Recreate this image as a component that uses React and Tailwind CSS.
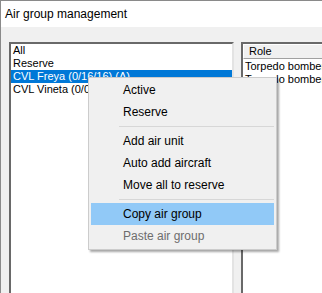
const items = ["All", "Reserve", "CVL Freya (0/16/16) (A)", "CVL Vineta (0/0/0) (R)"];

function MenuItem({ label, hover, disabled }) {
  return (
    <div
      className={
        "h-[22px] flex items-center pl-[32px] " +
        (hover ? "bg-[#91c9f7] " : "") +
        (disabled ? "text-[#6d6d6d]" : "text-black")
      }
    >
      {label}
    </div>
  );
}

function Separator() {
  return (
    <div className="h-[7px] flex items-center pl-[28px]">
      <div className="h-px w-full bg-[#d7d7d7]" />
    </div>
  );
}

export default function App() {
  return (
    <div
      className="relative w-[322px] h-[293px] overflow-hidden flex flex-col border-t border-l border-[#8a8a8a] bg-[#f0f0f0]"
      style={{ fontFamily: '"Liberation Sans", Arial, sans-serif' }}
    >
      <div className="h-[26px] shrink-0 bg-white flex items-center pl-[4px] text-[12px] text-black">
        Air group management
      </div>

      <div className="flex-1 flex pt-[15px] pl-[8px] gap-[7px] overflow-hidden">
        <div className="w-[225px] h-[300px] shrink-0 border-2 border-t-[#696969] border-l-[#696969] border-r-[#e3e3e3] border-b-[#e3e3e3] bg-white text-[11px] leading-[13px]">
          {items.map((it, i) => (
            <div
              key={it}
              className={
                "h-[13px] pl-[2px] whitespace-nowrap " +
                (i === 2 ? "bg-[#0078d7] text-white" : "text-black")
              }
            >
              {it}
            </div>
          ))}
        </div>

        <div className="w-[120px] h-[300px] shrink-0 border-2 border-t-[#696969] border-l-[#696969] border-r-[#e3e3e3] border-b-[#e3e3e3] bg-white text-[11px] leading-[13px]">
          <div className="h-[15px] bg-[#f0f0f0] border-t border-l border-white border-b border-b-[#a0a0a0] flex items-center pl-[5px] text-black">
            Role
          </div>
          <div className="pt-px pl-[2px] text-black whitespace-nowrap">
            <div className="h-[13px]">Torpedo bomber</div>
            <div className="h-[13px]">Torpedo bomber</div>
          </div>
        </div>
      </div>

      <div className="absolute left-[87px] top-[76px] w-[189px] h-[173px] bg-[#f0f0f0] border border-[#cccccc] shadow-[2px_2px_2px_rgba(0,0,0,0.35)] px-[2px] pt-px pb-[2px] text-[12px]">
        <MenuItem label="Active" />
        <MenuItem label="Reserve" />
        <Separator />
        <MenuItem label="Add air unit" />
        <MenuItem label="Auto add aircraft" />
        <MenuItem label="Move all to reserve" />
        <Separator />
        <MenuItem label="Copy air group" hover />
        <MenuItem label="Paste air group" disabled />
      </div>
    </div>
  );
}
